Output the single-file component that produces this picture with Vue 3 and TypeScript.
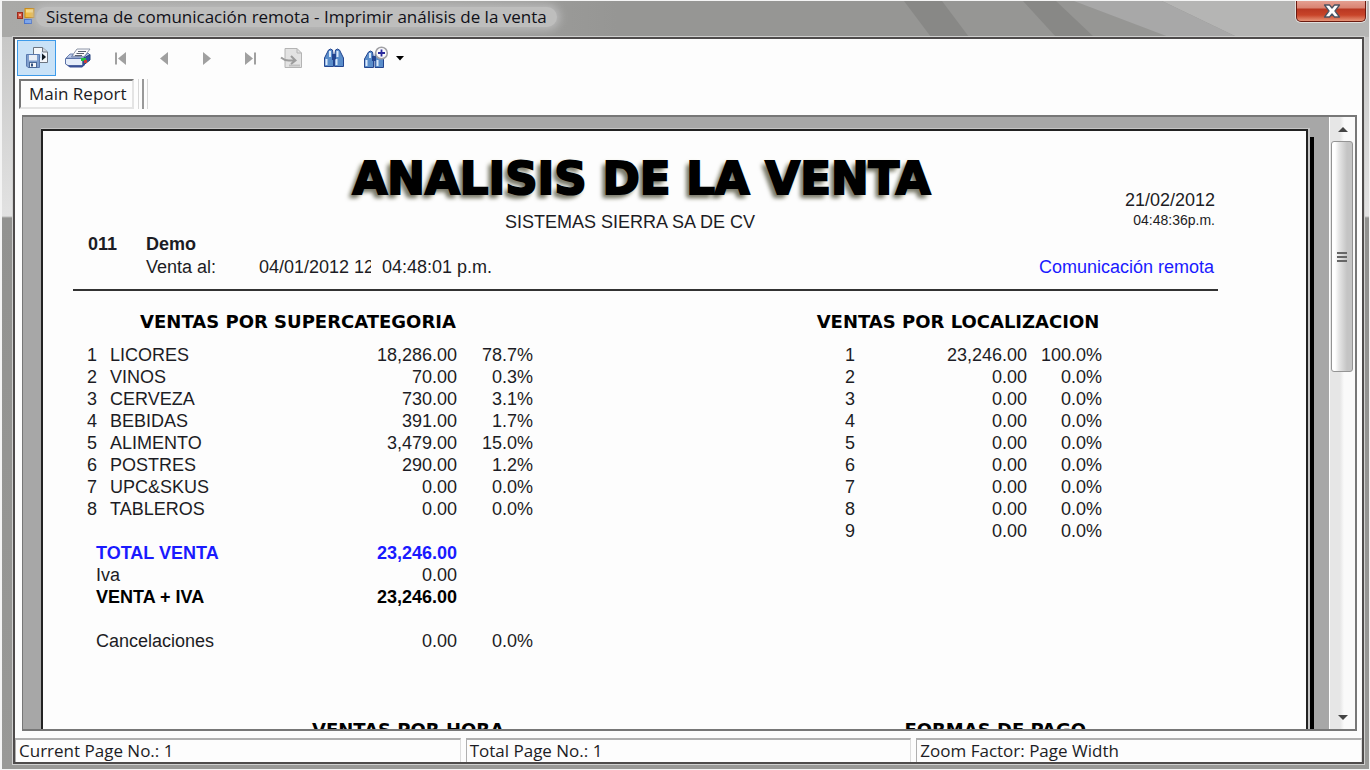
<script setup lang="ts">
interface Row { n: number; name?: string; amount: string; pct: string }

const categories: Row[] = [
  { n: 1, name: 'LICORES', amount: '18,286.00', pct: '78.7%' },
  { n: 2, name: 'VINOS', amount: '70.00', pct: '0.3%' },
  { n: 3, name: 'CERVEZA', amount: '730.00', pct: '3.1%' },
  { n: 4, name: 'BEBIDAS', amount: '391.00', pct: '1.7%' },
  { n: 5, name: 'ALIMENTO', amount: '3,479.00', pct: '15.0%' },
  { n: 6, name: 'POSTRES', amount: '290.00', pct: '1.2%' },
  { n: 7, name: 'UPC&SKUS', amount: '0.00', pct: '0.0%' },
  { n: 8, name: 'TABLEROS', amount: '0.00', pct: '0.0%' },
]

const locations: Row[] = Array.from({ length: 9 }, (_, i) => ({
  n: i + 1,
  amount: i === 0 ? '23,246.00' : '0.00',
  pct: i === 0 ? '100.0%' : '0.0%',
}))

const totals = [
  { label: 'TOTAL VENTA', amount: '23,246.00', pct: '', kind: 'strong blue' },
  { label: 'Iva', amount: '0.00', pct: '', kind: '' },
  { label: 'VENTA + IVA', amount: '23,246.00', pct: '', kind: 'strong' },
  { label: 'Cancelaciones', amount: '0.00', pct: '0.0%', kind: 'apart' },
]

const statuses = ['Current Page No.: 1', 'Total Page No.: 1', 'Zoom Factor: Page Width']
</script>

<template>
  <div class="window">
    <header class="titlebar">
      <svg class="sheen" width="470" height="36" viewBox="0 0 470 36" aria-hidden="true">
        <path d="M263 0H470V36H338Z" fill="#b5b5b4" />
        <path d="M175 0H263L338 36H270Z" fill="#a8a8a8" />
        <path d="M5 0H43L70 36H32Z" fill="#888886" />
        <path d="M124 0H157L195 36H157Z" fill="#888886" />
      </svg>
      <svg class="app-icon" width="20" height="18" viewBox="0 0 20 18" aria-hidden="true">
        <rect x="1.5" y="5.5" width="5" height="6" fill="#d2553f" stroke="#9c2c1e" />
        <rect x="3" y="7" width="2" height="2" fill="#f3b3a0" />
        <rect x="9" y="1.5" width="9" height="9" fill="#f4bd3c" stroke="#c98a18" />
        <rect x="10" y="2.5" width="7" height="3" fill="#fbdc85" />
        <rect x="8.5" y="12.5" width="7" height="4" fill="#7aa5ee" stroke="#4a74cc" />
      </svg>
      <h1 class="caption">Sistema de comunicación remota - Imprimir análisis de la venta</h1>
      <button class="close" type="button" aria-label="Cerrar">
        <svg width="18" height="14" viewBox="0 0 18 14" aria-hidden="true">
          <path d="M1.5 1H6.5L9 4L11.5 1H16.5L12 7L16.5 13H11.5L9 10L6.5 13H1.5L6 7Z" fill="#fff" stroke="#4c5362" stroke-width="1.3" stroke-linejoin="round" />
        </svg>
      </button>
    </header>

    <main class="client">
      <div class="toolbar" role="toolbar">
        <button class="tool export" type="button" aria-label="Export report">
          <svg width="24" height="24" viewBox="0 0 24 24">
            <path d="M8.5 1.5H17.5L22.5 6V16.5H8.5Z" fill="#f6f8fb" stroke="#6b7480" />
            <path d="M17.5 1.5V6H22.5" fill="#cfd6de" stroke="#6b7480" />
            <path d="M12 8H16V5L21 10.5L16 15V12H12Z" fill="#d5e4f5" />
            <path d="M17 7.5L21 11L17 14.5Z" fill="#111820" />
            <path d="M1.5 8.5H14.5V21.5H3L1.5 20Z" fill="#7f9fcd" stroke="#5a7ab0" />
            <rect x="4" y="9" width="8" height="5.5" fill="#e9eef6" />
            <rect x="4.5" y="16.5" width="7" height="5" fill="#f4f6f8" stroke="#4a6896" />
            <rect x="6" y="17.5" width="2" height="3" fill="#34527f" />
          </svg>
        </button>
        <button class="tool print" type="button" aria-label="Print report">
          <svg width="28" height="22" viewBox="0 0 28 22">
            <path d="M8 9L13 2H26L20 10Z" fill="#fbfbfc" stroke="#8c94a6" />
            <path d="M14 4.5H22M12.5 6.5H20M11 8.5H18" stroke="#59616f" />
            <path d="M2 11L6 7H9L7.5 10H20L24 6L26 8L22 12Z" fill="#bccbe9" stroke="#6e83b1" />
            <path d="M1.5 11.5H19V18.5H4L1.5 17Z" fill="#e5edfa" stroke="#5b72a8" />
            <path d="M19 11.5L26 7.5V13L19 18.5Z" fill="#3454a0" stroke="#29447e" />
            <path d="M3 18.5H18L21 16.5V18L18 20.5H6Z" fill="#384f96" />
            <rect x="17" y="11" width="5" height="3" fill="#21c33d" />
            <rect x="20" y="13" width="3" height="3" fill="#cf3b35" />
          </svg>
        </button>
        <button class="tool" type="button" aria-label="First page">
          <svg width="14" height="14" viewBox="0 0 14 14"><path d="M2 1.5V13.5" stroke="#a0a0a0" stroke-width="2" /><path d="M12 1V14L4 7.5Z" fill="#a0a0a0" /></svg>
        </button>
        <button class="tool" type="button" aria-label="Previous page">
          <svg width="14" height="14" viewBox="0 0 14 14"><path d="M11 1V14L3 7.5Z" fill="#a0a0a0" /></svg>
        </button>
        <button class="tool" type="button" aria-label="Next page">
          <svg width="14" height="14" viewBox="0 0 14 14"><path d="M3 1V14L11 7.5Z" fill="#a0a0a0" /></svg>
        </button>
        <button class="tool" type="button" aria-label="Last page">
          <svg width="14" height="14" viewBox="0 0 14 14"><path d="M12 1.5V13.5" stroke="#a0a0a0" stroke-width="2" /><path d="M2 1V14L10 7.5Z" fill="#a0a0a0" /></svg>
        </button>
        <button class="tool goto" type="button" aria-label="Go to page">
          <svg width="24" height="22" viewBox="0 0 24 22">
            <path d="M5 1.5H17L21.5 6V20.5H5Z" fill="#e3e3e3" stroke="#b4b4b4" />
            <path d="M17 1.5V6H21.5" fill="none" stroke="#b4b4b4" />
            <path d="M9 18.5H20" stroke="#c0c0c0" stroke-width="2" />
            <path d="M1 10.5Q5 14 10 13.5H15M11 9L15.5 13.5L11 17" fill="none" stroke="#9c9c9c" stroke-width="2" />
          </svg>
        </button>
        <button class="tool" type="button" aria-label="Find text">
          <svg width="22" height="20" viewBox="0 0 22 20">
            <path d="M5.5 2Q7.5 0 9.5 2L10.5 9V18.5H1.5V10Z" fill="#5a8dca" stroke="#24458f" />
            <path d="M12.5 2Q14.5 0 16.5 2L20.5 10V18.5H11.5V9Z" fill="#5a8dca" stroke="#24458f" />
            <rect x="9" y="6" width="4" height="6" fill="#24458f" />
            <path d="M3.5 11V17M13.5 11V17M7 3V9M14.5 3V9" stroke="#dceafa" stroke-width="2" />
          </svg>
        </button>
        <button class="tool zoom" type="button" aria-label="Zoom">
          <svg width="26" height="24" viewBox="0 0 26 24">
            <path d="M5.5 6Q7.5 4 9.5 6L10.5 12V21.5H1.5V13Z" fill="#5a8dca" stroke="#24458f" />
            <path d="M12.5 6Q14.5 4 16.5 6L20.5 13V21.5H12V12Z" fill="#5a8dca" stroke="#24458f" />
            <rect x="9" y="10" width="4" height="5" fill="#24458f" />
            <path d="M3.5 14V20M14.5 14V20M7 7V12" stroke="#dceafa" stroke-width="2" />
            <circle cx="18.5" cy="7" r="5.8" fill="#fafafc" stroke="#a0a0a4" stroke-width="1.5" />
            <path d="M15 7H22M18.5 3.5V10.5" stroke="#2a2a9c" stroke-width="1.8" />
          </svg>
          <svg width="8" height="5" viewBox="0 0 8 5"><path d="M0 0H8L4 4.5Z" fill="#000" /></svg>
        </button>
      </div>

      <div class="tabs">
        <button class="tab" type="button">Main Report</button>
      </div>

      <section class="viewer">
        <div class="canvas">
          <article class="paper">
            <h2 class="title">ANALISIS DE LA VENTA</h2>
            <div class="head">
              <p class="company">SISTEMAS SIERRA SA DE CV</p>
              <div class="stamp">
                <p>21/02/2012</p>
                <p class="time">04:48:36p.m.</p>
              </div>
            </div>
            <div class="branch"><span class="code">011</span><span>Demo</span></div>
            <div class="sale">
              <span class="label">Venta al:</span>
              <span class="date">04/01/2012 12</span>
              <span>04:48:01 p.m.</span>
              <span class="remote">Comunicación remota</span>
            </div>
            <hr>
            <div class="sections">
              <section class="by-category">
                <h3>VENTAS POR SUPERCATEGORIA</h3>
                <table>
                  <tbody>
                    <tr v-for="r in categories" :key="r.n">
                      <td class="num">{{ r.n }}</td>
                      <td class="name">{{ r.name }}</td>
                      <td class="amount">{{ r.amount }}</td>
                      <td class="pct">{{ r.pct }}</td>
                    </tr>
                  </tbody>
                </table>
                <table class="totals">
                  <tbody>
                    <tr v-for="t in totals" :key="t.label" :class="t.kind">
                      <td class="total">{{ t.label }}</td>
                      <td class="amount">{{ t.amount }}</td>
                      <td class="pct">{{ t.pct }}</td>
                    </tr>
                  </tbody>
                </table>
              </section>
              <section class="by-location">
                <h3>VENTAS POR LOCALIZACION</h3>
                <table>
                  <tbody>
                    <tr v-for="r in locations" :key="r.n">
                      <td class="place">{{ r.n }}</td>
                      <td class="amount">{{ r.amount }}</td>
                      <td class="pct">{{ r.pct }}</td>
                    </tr>
                  </tbody>
                </table>
              </section>
            </div>
            <div class="next">
              <h3>VENTAS POR HORA</h3>
              <h3>FORMAS DE PAGO</h3>
            </div>
          </article>
        </div>
        <div class="scroll">
          <button type="button" aria-label="Scroll up"><svg width="10" height="5" viewBox="0 0 10 5"><path d="M0 5L5 0L10 5Z" fill="#444" /></svg></button>
          <div class="track">
            <div class="thumb"><i></i><i></i><i></i></div>
          </div>
          <button type="button" aria-label="Scroll down"><svg width="10" height="5" viewBox="0 0 10 5"><path d="M0 0H10L5 5Z" fill="#444" /></svg></button>
        </div>
      </section>

      <footer class="status">
        <span v-for="s in statuses" :key="s">{{ s }}</span>
      </footer>
    </main>
  </div>
</template>

<style>
body { margin: 0; }
</style>

<style scoped>
* { box-sizing: border-box; }
h1, h2, h3, p { margin: 0; font-weight: 400; }
button { font: inherit; color: inherit; border: 0; background: none; padding: 0; }

.window {
  display: flex;
  flex-direction: column;
  height: 100vh;
  padding: 0 5px 5px 11px;
  border: solid #f4f4f4;
  border-width: 1px 1px 1px 2px;
  overflow: hidden;
  color: #1c1c24;
  font: 17px/22px "Open Sans", "Noto Sans", sans-serif;
  background: linear-gradient(#c2c2c1 0, #e2e2e2 215px, #929290 217px, #999997 100%);
}
.titlebar {
  position: relative;
  display: flex;
  align-items: flex-start;
  flex: 0 0 36px;
  margin: 0 -5px 0 -11px;
  padding: 6px 4px 0 14px;
  background: linear-gradient(90deg, #a9a9a7, #a3a3a1 30%, #969694 45%, #969694);
}
.sheen { position: absolute; top: 0; right: 0; }
.caption {
  padding: 0 10px;
  border-radius: 11px;
  font-size: 17px;
  line-height: 20px;
  color: #101018;
  background: #bebebd;
  box-shadow: 0 0 8px 3px #bababa;
  white-space: nowrap;
}
.close {
  position: relative;
  width: 70px;
  height: 22px;
  margin: -7px -1px 0 auto;
  border: 1px solid #6b1a10;
  border-top: 0;
  border-radius: 0 0 5px 5px;
  background: linear-gradient(#e5a396, #d98372 8px, #b93722 9px, #c84429 15px, #e69377);
  box-shadow: 0 0 0 1px #e0dedc;
}
.close svg { display: block; margin: 0 auto 0 26px; }

.client {
  position: relative;
  display: flex;
  flex: 1;
  flex-direction: column;
  min-height: 0;
  border: 2px solid #4e4b4b;
  box-shadow: 0 0 0 1px #d0d0cf;
  background: #fdfdfd;
}
.toolbar { display: flex; align-items: center; height: 38px; padding: 2px; }
.tool {
  display: flex;
  align-items: center;
  justify-content: center;
  width: 43px;
  height: 36px;
}
.export { width: 39px; border: 1px solid #3d9bea; background: #c9e2f7; }
.goto { width: 41px; }
.zoom { width: 50px; gap: 7px; margin-left: 3px; }
.tabs { display: flex; height: 34px; padding: 0 4px; }
.tab {
  height: 30px;
  margin-top: 2px;
  padding: 0 5px 0 8px;
  border: 2px solid #e4e4e4;
  border-top-color: #777;
  border-left-color: #777;
}
.tabs::after {
  content: "";
  width: 8px;
  height: 30px;
  margin: 2px 0 0 4px;
  border: solid #d8d8d8;
  border-width: 0 1px;
  background: linear-gradient(90deg, transparent 3px, #999 3px, #999 5px, transparent 5px);
}

.viewer {
  display: flex;
  flex: 1;
  min-height: 0;
  margin: 4px 5px 7px 7px;
  border: 2px solid #777;
  border-left-width: 1px;
  overflow: hidden;
}
.canvas { flex: 1; min-width: 0; padding: 12px 21px 0 18px; background: #a7a7a7; overflow: hidden; }
.paper {
  height: 900px;
  padding: 28px 88px 0 30px;
  border: 2px solid #222;
  background: #fdfdfd;
  box-shadow: 1px 0 0 1px #c4c4c4, 6px 8px 0 0 #000;
  font: 18px/22px "Liberation Sans", Arial, sans-serif;
}
.title {
  margin-bottom: 12px;
  padding-right: 8px;
  font: 700 45px/40px "DejaVu Sans", sans-serif;
  text-align: center;
  white-space: nowrap;
  color: #000;
  -webkit-text-stroke: 2px #000;
  text-shadow: -4px 4px 4px #77776a, -2px 2px 5px #c8c8a8;
}
.head { display: grid; grid-template-columns: 1fr 1fr; height: 22px; align-items: start; }
.company { grid-area: 1 / 1 / 2 / 3; padding-right: 31px; text-align: center; }
.stamp { grid-area: 1 / 2 / 2 / 3; margin-top: -22px; padding-right: 3px; text-align: right; }
.time { font-size: 14px; line-height: 18px; }
.branch { display: flex; padding-left: 15px; font-weight: 700; }
.code { width: 58px; }
.sale { display: flex; margin-top: 1px; padding: 0 4px 0 73px; white-space: nowrap; }
.label { width: 113px; }
.date { width: 112px; margin-right: 11px; overflow: hidden; }
.remote { margin-left: auto; color: #1a1aff; }
hr { height: 2px; margin: 11px 0 20px; border: 0; background: #333; }
h3 { font: 700 18px/22px "DejaVu Sans", sans-serif; text-align: center; white-space: nowrap; color: #000; }
.sections { display: flex; justify-content: space-between; padding: 0 115px 0 14px; }
.by-category { width: 446px; }
.by-category h3 { padding-right: 24px; }
.by-location { width: 296px; }
.by-location h3 { padding-left: 6px; }
table { width: 100%; margin-top: 11px; border-collapse: collapse; table-layout: fixed; }
td { height: 22px; padding: 0; line-height: 22px; }
.num { width: 10px; }
.name { padding-left: 13px; }
.amount { width: 130px; text-align: right; }
.pct { width: 76px; text-align: right; }
.totals { margin-top: 22px; }
.total { padding-left: 9px; }
.strong { font-weight: 700; color: #000; }
.blue { color: #1a1aff; }
.apart td { height: 44px; padding-top: 22px; }
.place { padding-left: 38px; }
.by-location .pct { padding-right: 1px; }
.next { display: flex; justify-content: space-between; padding: 67px 132px 0 239px; }

.scroll {
  display: flex;
  flex-direction: column;
  width: 26px;
  border-left: 1px solid #fff;
  background: linear-gradient(90deg, #e6e6e6 10px, #fafafa 14px);
}
.scroll button { display: flex; align-items: center; justify-content: center; height: 24px; }
.track { flex: 1; padding: 0 2px 0 1px; }
.thumb {
  display: flex;
  flex-direction: column;
  align-items: center;
  justify-content: center;
  gap: 2px;
  height: 41%;
  border: 1px solid #949494;
  border-radius: 3px;
  background: linear-gradient(90deg, #fff 3px, #e6e6e6 7px, #c4c4c4 15px, #c4c4c4);
}
.thumb i { width: 10px; height: 2px; background: #666; }

.status { display: grid; grid-template-columns: 1fr 1fr 1fr; gap: 5px; height: 24px; }
.status span {
  padding-left: 3px;
  border: solid #b0b0b0;
  border-width: 2px 1px 0;
  border-right-color: #ddd;
  line-height: 22px;
  white-space: nowrap;
}
</style>
